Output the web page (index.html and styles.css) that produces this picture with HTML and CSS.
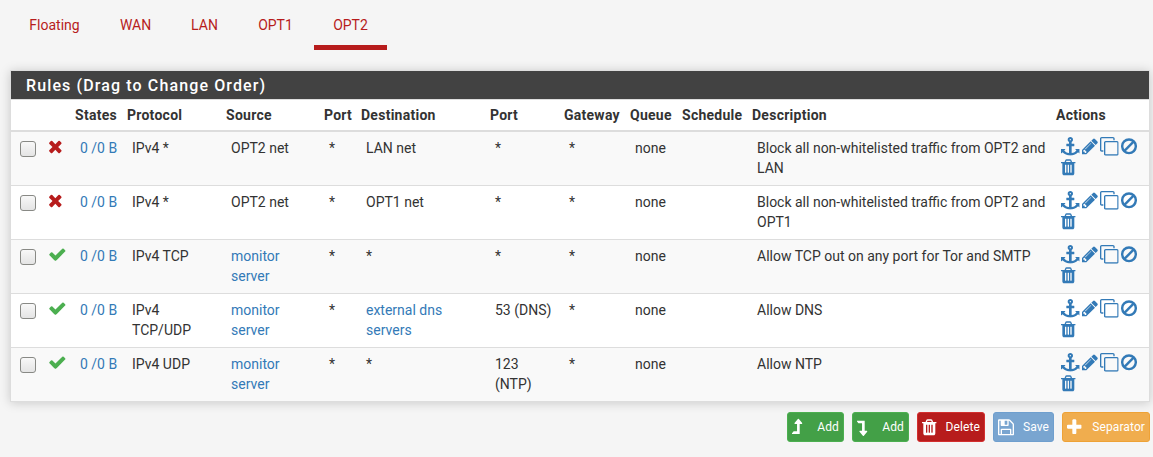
FILE: index.html
```
<!DOCTYPE html>
<html lang="en">
<head>
<meta charset="utf-8">
<title>Firewall Rules</title>
<link rel="stylesheet" href="styles.css">
</head>
<body>
<svg class="sprite" aria-hidden="true">
  <symbol id="check" viewBox="0 0 1792 1792"><path d="M1671 566q0 40-28 68l-724 724-136 136q-28 28-68 28t-68-28l-136-136-362-362q-28-28-28-68t28-68l136-136q28-28 68-28t68 28l294 295 656-657q28-28 68-28t68 28l136 136q28 28 28 68z"/></symbol>
  <symbol id="times" viewBox="0 0 1792 1792"><path d="M1490 1322q0 40-28 68l-136 136q-28 28-68 28t-68-28l-294-294-294 294q-28 28-68 28t-68-28l-136-136q-28-28-28-68t28-68l294-294-294-294q-28-28-28-68t28-68l136-136q28-28 68-28t68 28l294 294 294-294q28-28 68-28t68 28l136 136q28 28 28 68t-28 68l-294 294 294 294q28 28 28 68z"/></symbol>
  <symbol id="anchor" viewBox="0 0 1792 1792"><path d="M960 256q0-26-19-45t-45-19-45 19-19 45 19 45 45 19 45-19 19-45zm832 928v352q0 22-20 30-8 2-12 2-12 0-23-9l-93-93q-119 143-318.500 226.500t-429.500 83.500-429.500-83.500-318.500-226.500l-93 93q-9 9-23 9-4 0-12-2-20-8-20-30v-352q0-14 9-23t23-9h352q22 0 30 20 8 19-7 35l-100 100q67 91 189.500 153.500t271.500 82.500v-647h-192q-26 0-45-19t-19-45v-128q0-26 19-45t45-19h192v-163q-58-34-93-92.500t-35-128.500q0-106 75-181t181-75 181 75 75 181q0 70-35 128.500t-93 92.500v163h192q26 0 45 19t19 45v128q0 26-19 45t-45 19h-192v647q149-20 271.500-82.500t189.500-153.500l-100-100q-15-16-7-35 8-20 30-20h352q14 0 23 9t9 23z"/></symbol>
  <symbol id="pencil" viewBox="128 0 1536 1792"><path d="M491 1536l91-91-235-235-91 91v107h128v128h107zm523-928q0-22-22-22-10 0-17 7l-542 542q-7 7-7 17 0 22 22 22 10 0 17-7l542-542q7-7 7-17zm-54-192l416 416-832 832h-416v-416zm683 96q0 53-37 90l-166 166-416-416 166-165q36-38 90-38 53 0 91 38l235 234q37 39 37 91z"/></symbol>
  <symbol id="clone" viewBox="0 0 1792 1792"><path fill-rule="evenodd" d="M1664 1632v-1088q0-13-9.500-22.500t-22.500-9.500h-1088q-13 0-22.500 9.500t-9.500 22.500v1088q0 13 9.500 22.500t22.500 9.500h1088q13 0 22.500-9.500t9.500-22.500zm128-1088v1088q0 66-47 113t-113 47h-1088q-66 0-113-47t-47-113v-1088q0-66 47-113t113-47h1088q66 0 113 47t47 113zm-384-384v160h-128v-160q0-13-9.500-22.500t-22.500-9.500h-1088q-13 0-22.500 9.500t-9.500 22.500v1088q0 13 9.500 22.500t22.500 9.500h160v128h-160q-66 0-113-47t-47-113v-1088q0-66 47-113t113-47h1088q66 0 113 47t47 113z"/></symbol>
  <symbol id="ban" viewBox="128 0 1536 1792"><g fill="none" stroke="currentColor" stroke-width="230"><circle cx="896" cy="890" r="655"/><path d="M1360 427L432 1355"/></g></symbol>
  <symbol id="trash" viewBox="192 0 1408 1792"><path fill-rule="evenodd" d="M704 1376v-704q0-14-9-23t-23-9h-64q-14 0-23 9t-9 23v704q0 14 9 23t23 9h64q14 0 23-9t9-23zm256 0v-704q0-14-9-23t-23-9h-64q-14 0-23 9t-9 23v704q0 14 9 23t23 9h64q14 0 23-9t9-23zm256 0v-704q0-14-9-23t-23-9h-64q-14 0-23 9t-9 23v704q0 14 9 23t23 9h64q14 0 23-9t9-23zm-544-992h448l-48-117q-7-9-17-11h-317q-10 2-17 11zm928 32v64q0 14-9 23t-23 9h-96v948q0 83-47 143.500t-113 60.500h-832q-66 0-113-58.500t-47-141.500v-952h-96q-14 0-23-9t-9-23v-64q0-14 9-23t23-9h309l70-167q15-37 54-63t79-26h320q40 0 79 26t54 63l70 167h309q14 0 23 9t9 23z"/></symbol>
  <symbol id="up" viewBox="0 0 1024 1792"><path d="M990 539q-18 37-58 37h-192v928q0 14-9 23t-23 9h-704q-21 0-29-18-8-20 4-35l160-192q9-11 25-11h320v-704h-192q-40 0-58-37-17-37 9-68l320-384q18-22 49-22t49 22l320 384q27 32 9 68z"/></symbol>
  <symbol id="floppy" viewBox="128 0 1536 1792"><path fill-rule="evenodd" d="M512 1536h768v-384h-768v384zm896 0h128v-896q0-14-10-38.500t-20-34.500l-281-281q-10-10-34-20t-39-10v416q0 40-28 68t-68 28h-576q-40 0-68-28t-28-68v-416h-128v1280h128v-416q0-40 28-68t68-28h832q40 0 68 28t28 68v416zm-384-928v-320q0-13-9.500-22.500t-22.500-9.500h-192q-13 0-22.500 9.500t-9.500 22.500v320q0 13 9.500 22.500t22.500 9.500h192q13 0 22.500-9.500t9.500-22.500zm640 32v928q0 40-28 68t-68 28h-1344q-40 0-68-28t-28-68v-1344q0-40 28-68t68-28h928q40 0 88 20t76 48l280 280q28 28 48 76t20 88z"/></symbol>
  <symbol id="plus" viewBox="192 0 1408 1792"><path d="M1600 736v192q0 40-28 68t-68 28h-416v416q0 40-28 68t-68 28h-192q-40 0-68-28t-28-68v-416h-416q-40 0-68-28t-28-68v-192q0-40 28-68t68-28h416v-416q0-40 28-68t68-28h192q40 0 68 28t28 68v416h416q40 0 68 28t28 68z"/></symbol>
</svg>

<nav class="tabs">
  <a class="tab">Floating</a><a class="tab tab-wan">WAN</a><a class="tab tab-lan">LAN</a><a class="tab tab-opt">OPT1</a><a class="tab active">OPT2</a>
</nav>

<section class="panel">
  <h2 class="panel-title">Rules (Drag to Change Order)</h2>
  <table class="rules">
    <colgroup><col class="c-check"><col class="c-icon"><col class="c-states"><col class="c-proto"><col class="c-source"><col class="c-port"><col class="c-dest"><col class="c-dport"><col class="c-gateway"><col class="c-queue"><col class="c-schedule"><col class="c-desc"><col class="c-actions"></colgroup>
    <thead>
      <tr><th></th><th></th><th>States</th><th>Protocol</th><th>Source</th><th>Port</th><th>Destination</th><th>Port</th><th>Gateway</th><th>Queue</th><th>Schedule</th><th>Description</th><th>Actions</th></tr>
    </thead>
    <tbody>
      <tr><td><input type="checkbox" class="box"></td><td><svg class="icon block"><use href="#times"/></svg></td><td><a>0 /0 B</a></td><td>IPv4 *</td><td>OPT2 net</td><td>*</td><td>LAN net</td><td>*</td><td>*</td><td>none</td><td></td><td>Block all non-whitelisted traffic from OPT2 and LAN</td><td class="actions"><div class="action-list"><svg class="icon"><use href="#anchor"/></svg><svg class="icon w16"><use href="#pencil"/></svg><svg class="icon"><use href="#clone"/></svg><svg class="icon w16"><use href="#ban"/></svg><svg class="icon w14"><use href="#trash"/></svg></div></td></tr>
      <tr><td><input type="checkbox" class="box"></td><td><svg class="icon block"><use href="#times"/></svg></td><td><a>0 /0 B</a></td><td>IPv4 *</td><td>OPT2 net</td><td>*</td><td>OPT1 net</td><td>*</td><td>*</td><td>none</td><td></td><td>Block all non-whitelisted traffic from OPT2 and OPT1</td><td class="actions"><div class="action-list"><svg class="icon"><use href="#anchor"/></svg><svg class="icon w16"><use href="#pencil"/></svg><svg class="icon"><use href="#clone"/></svg><svg class="icon w16"><use href="#ban"/></svg><svg class="icon w14"><use href="#trash"/></svg></div></td></tr>
      <tr><td><input type="checkbox" class="box"></td><td><svg class="icon pass"><use href="#check"/></svg></td><td><a>0 /0 B</a></td><td>IPv4 TCP</td><td><a>monitor<br>server</a></td><td>*</td><td>*</td><td>*</td><td>*</td><td>none</td><td></td><td>Allow TCP out on any port for Tor and SMTP</td><td class="actions"><div class="action-list"><svg class="icon"><use href="#anchor"/></svg><svg class="icon w16"><use href="#pencil"/></svg><svg class="icon"><use href="#clone"/></svg><svg class="icon w16"><use href="#ban"/></svg><svg class="icon w14"><use href="#trash"/></svg></div></td></tr>
      <tr><td><input type="checkbox" class="box"></td><td><svg class="icon pass"><use href="#check"/></svg></td><td><a>0 /0 B</a></td><td>IPv4<br>TCP/UDP</td><td><a>monitor<br>server</a></td><td>*</td><td><a>external dns<br>servers</a></td><td>53 (DNS)</td><td>*</td><td>none</td><td></td><td>Allow DNS</td><td class="actions"><div class="action-list"><svg class="icon"><use href="#anchor"/></svg><svg class="icon w16"><use href="#pencil"/></svg><svg class="icon"><use href="#clone"/></svg><svg class="icon w16"><use href="#ban"/></svg><svg class="icon w14"><use href="#trash"/></svg></div></td></tr>
      <tr><td><input type="checkbox" class="box"></td><td><svg class="icon pass"><use href="#check"/></svg></td><td><a>0 /0 B</a></td><td>IPv4 UDP</td><td><a>monitor<br>server</a></td><td>*</td><td>*</td><td>123<br>(NTP)</td><td>*</td><td>none</td><td></td><td>Allow NTP</td><td class="actions"><div class="action-list"><svg class="icon"><use href="#anchor"/></svg><svg class="icon w16"><use href="#pencil"/></svg><svg class="icon"><use href="#clone"/></svg><svg class="icon w16"><use href="#ban"/></svg><svg class="icon w14"><use href="#trash"/></svg></div></td></tr>
    </tbody>
  </table>
</section>

<div class="buttons">
  <button class="btn add"><svg class="bicon level"><use href="#up"/></svg>Add</button>
  <button class="btn add"><svg class="bicon level down"><use href="#up"/></svg>Add</button>
  <button class="btn delete"><svg class="bicon narrow"><use href="#trash"/></svg>Delete</button>
  <button class="btn save"><svg class="bicon"><use href="#floppy"/></svg>Save</button>
  <button class="btn separator"><svg class="bicon narrow"><use href="#plus"/></svg>Separator</button>
</div>
</body>
</html>
```
FILE: styles.css
```
* { box-sizing: border-box; }
body { margin: 0; height: 457px; overflow: hidden; background: #f5f5f5; color: #333; font: 14px/20px Roboto, sans-serif; }
.sprite { display: none; }
svg { fill: currentColor; overflow: visible; }
a { color: #337ab7; text-decoration: none; }

.tabs { display: flex; height: 50px; padding-left: 10px; }
.tab { width: 89px; padding-top: 15px; border-bottom: 5px solid transparent; text-align: center; color: #b71c1c; }
.tab-wan { width: 73px; }
.tab-lan { width: 65px; }
.tab-opt { width: 77px; }
.tab.active { width: 73px; border-color: #b71c1c; }

.panel { width: 1140px; margin: 20px 0 0 10px; border: 1px solid #ddd; background: #fff; box-shadow: 0 1px 10px rgba(0,0,0,.18); }
.panel-title { height: 28px; margin: 0; padding-left: 15px; background: #424242; color: #fff; font-size: 16px; font-weight: 500; line-height: 29px; letter-spacing: 1.12px; }
.rules { width: 1138px; table-layout: fixed; border-collapse: separate; border-spacing: 0; }
.rules th { height: 33px; padding: 5px 0 5px 5px; border-top: 1px solid #ddd; border-bottom: 2px solid #ddd; text-align: left; font-weight: 700; letter-spacing: .26px; white-space: nowrap; }
.rules td { height: 54px; padding: 6px 0 6px 10px; border-bottom: 1px solid #ddd; vertical-align: top; }
.rules tbody tr:nth-child(odd) { background: #f9f9f9; }
.rules tbody tr:last-child td { height: 53px; border-bottom: 0; }
.rules td:first-child { padding: 9px 0 0 9px; }
.rules td:nth-child(2) { padding: 5px 0 0 5px; }
.rules td:nth-child(3) { white-space: nowrap; }
.c-check { width: 32px; }
.c-icon { width: 27px; }
.c-states { width: 52px; }
.c-proto { width: 99px; }
.c-source { width: 98px; }
.c-port { width: 37px; }
.c-dest { width: 129px; }
.c-dport { width: 74px; }
.c-gateway { width: 66px; }
.c-queue { width: 52px; }
.c-schedule { width: 70px; }
.c-desc { width: 304px; }
.c-actions { width: 98px; }

.box { display: block; appearance: none; width: 16px; height: 16px; margin: 0; border: 1px solid #888985; border-radius: 3px; background: linear-gradient(#f8f8f8, #e4e4e4); }
.icon { display: block; width: 18.67px; height: 18.67px; }
.w16 { width: 16px; }
.w14 { width: 14.67px; }
.block { margin-left: -2px; color: #b71c1c; }
.pass { color: #4caf50; }
.rules .actions { padding-top: 5px; }
.action-list { display: flex; flex-wrap: wrap; column-gap: 2.1px; row-gap: 2px; width: 85px; color: #337ab7; }

.buttons { display: flex; justify-content: flex-end; gap: 8px; padding: 10px 3px 0 0; }
.btn { display: flex; align-items: center; justify-content: space-between; height: 30px; padding: 0 4px; border: 1px solid; border-radius: 3px; color: #fff; font: 12px/18px Roboto, sans-serif; letter-spacing: .1px; }
.bicon { width: 16px; height: 18.67px; }
.narrow { width: 14.67px; }
.level { width: 10.67px; }
.down { transform: scaleY(-1); }
.add { width: 57px; background: #43a047; border-color: #4caf50; }
.delete { width: 68px; background: #b71c1c; border-color: #d32f2f; }
.save { width: 61px; background: #79a5d0; border-color: #6f9fce; }
.separator { width: 88px; background: #f0ad4e; border-color: #eea236; }
```
